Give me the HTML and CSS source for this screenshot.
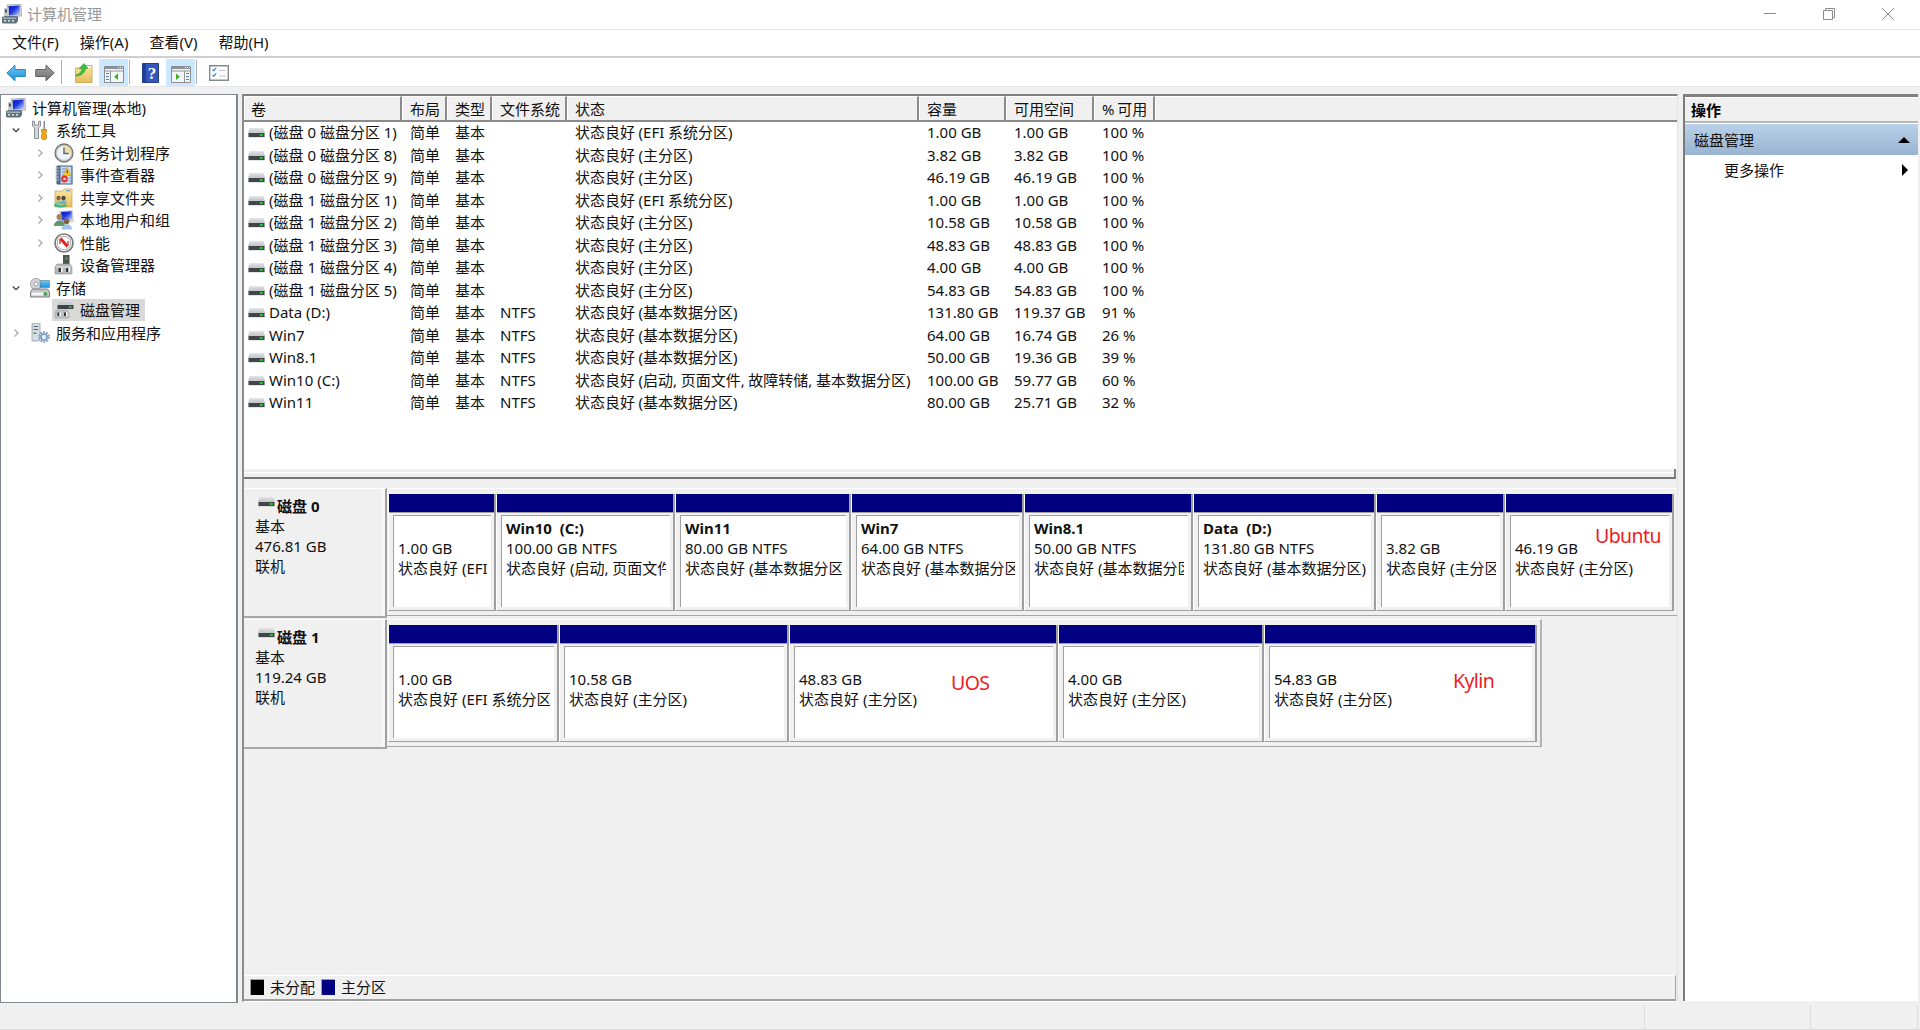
FILE: index.html
```html
<!DOCTYPE html>
<html lang="zh-CN">

<head>
    <meta charset="UTF-8">
    <meta name="viewport" content="width=device-width, initial-scale=1.0">
    <title>计算机管理</title>
    <link rel="stylesheet" href="styles.css">
</head>

<body>
    <!-- 图标 -->
    <svg class="defs" width="0" height="0">
        <defs>
            <linearGradient id="g-screen" x1="0" y1="0" x2="1" y2="1">
                <stop offset="0" stop-color="#0a16b8" />
                <stop offset=".45" stop-color="#1c35e0" />
                <stop offset="1" stop-color="#d5e0fb" />
            </linearGradient>
            <linearGradient id="g-blue" x1="0" y1="0" x2="0" y2="1">
                <stop offset="0" stop-color="#6cc8f5" />
                <stop offset="1" stop-color="#1a8fd8" />
            </linearGradient>
            <linearGradient id="g-gray" x1="0" y1="0" x2="0" y2="1">
                <stop offset="0" stop-color="#a5a5a5" />
                <stop offset="1" stop-color="#6e6e6e" />
            </linearGradient>
            <linearGradient id="g-folder" x1="0" y1="0" x2="0" y2="1">
                <stop offset="0" stop-color="#fbe6a4" />
                <stop offset="1" stop-color="#e6bd5c" />
            </linearGradient>
            <linearGradient id="g-top" x1="0" y1="0" x2="0" y2="1">
                <stop offset="0" stop-color="#e3e5e7" />
                <stop offset="1" stop-color="#bfc2c6" />
            </linearGradient>
            <symbol id="i-computer" viewBox="0 0 20 20">
                <path d="M5 1l14-1 .6 12L6 13z" fill="#d0d2d6" stroke="#9599a3" stroke-width=".6" />
                <path d="M6.500 2.300l11-.9.5 9.300-11 .8z" fill="url(#g-screen)" />
                <path d="M11 12h5v3h-5z" fill="#a0a5ae" />
                <path d="M2 4h4.500v9H2z" fill="#c6cad0" />
                <path d="M3 5.500h2v3H3z" fill="#4b5563" />
                <path d="M0 13l3-1h11l2 1v4l-2 2.500H1l-1-1z" fill="#5f737f" />
                <path d="M1 13.500h13v1.500H1z" fill="#a3b0b7" />
                <path d="M2 16h2v1.500H2zM6 16h2v1.500H6zM10 16h2v1.500h-2z" fill="#dfe6ea" />
            </symbol>
            <symbol id="i-tools" viewBox="0 0 20 20">
                <path d="M2.500 1v5l2 2v10.500h4V8l2-2V1l-2 .5V5h-4V1.500z" fill="#d4d6d8" stroke="#83878b" stroke-width=".9" />
                <path d="M13.500 1h1.600v10h-1.600z" fill="#8b8f94" />
                <path d="M11.500 9.500h5v2.500l-.8 1 .8 2v3.500l-1 1h-3l-1-1V15l.8-2-.8-1z" fill="#f0a818" stroke="#b87809" stroke-width=".7" />
            </symbol>
            <symbol id="i-clock" viewBox="0 0 20 20">
                <circle cx="10" cy="10" r="9" fill="#b5b6b4" stroke="#777876" stroke-width="1.300" />
                <circle cx="10" cy="10" r="7.200" fill="#edf4fa" stroke="#d9d9d5" stroke-width=".8" />
                <path d="M10 10V3a7 7 0 0 1 7 7z" fill="#f4dca2" />
                <path d="M10 4.500V10.500h4.800" fill="none" stroke="#5b6c82" stroke-width="1.500" />
            </symbol>
            <symbol id="i-event" viewBox="0 0 20 20">
                <path d="M3.500 1h14.500v18H3.500z" fill="#c9d8f0" stroke="#43618f" stroke-width="1.200" />
                <path d="M2.500 1h4v18h-4z" fill="#50678d" />
                <path d="M1 3h4M1 6h4M1 9h4M1 12h4M1 15h4" stroke="#b9c6d6" />
                <path d="M8 4h4M8 7h3M8 10h3M15 10h2M15 13h2M15 16h2" stroke="#6f8ec0" />
                <path d="M13 2.500l4 8h-7.500z" fill="#ffd42a" stroke="#c59200" stroke-width=".5" />
                <path d="M13.200 5v3.500" stroke="#222" />
                <circle cx="10.500" cy="14" r="3.400" fill="#db3b38" />
                <path d="M9.400 12.900l2.200 2.200m0-2.200l-2.200 2.200" stroke="#fff" />
            </symbol>
            <symbol id="i-share" viewBox="0 0 20 20">
                <path d="M1 3h8l1-2h8v18H1z" fill="url(#g-folder)" stroke="#cda044" stroke-width=".7" />
                <path d="M12 2.800h4" stroke="#599ad8" stroke-width="1.200" />
                <circle cx="4.500" cy="10" r="2.200" fill="#876247" />
                <circle cx="9.500" cy="10" r="2.200" fill="#574535" />
                <path d="M1.500 17c0-6.500 6-6.500 6 0z" fill="#8cc3a4" />
                <path d="M6.500 16c0-5.500 6-5.500 6 0z" fill="#6aaede" />
                <path d="M.5 16.500c3 2.500 7 2.500 12 .5" stroke="#39b67f" stroke-width="2" fill="none" />
            </symbol>
            <symbol id="i-users" viewBox="0 0 20 20">
                <path d="M5 1l14-1 .6 12L6 13z" fill="#ccd0d6" />
                <path d="M7 2l10.500-.7.5 8.700L8 10.500z" fill="url(#g-screen)" />
                <circle cx="5.500" cy="7" r="3" fill="#a28463" />
                <path d="M0 16c0-7.500 11-7.500 11 0z" fill="#66956b" />
                <circle cx="12.500" cy="11.500" r="2.800" fill="#855f46" />
                <path d="M7.500 19.500c0-7 10.500-7 10.500 0z" fill="#9ec5e8" />
            </symbol>
            <symbol id="i-perf" viewBox="0 0 20 20">
                <circle cx="10" cy="10" r="9" fill="#fff" stroke="#77787a" stroke-width="1.700" />
                <circle cx="10" cy="10" r="6.800" fill="#fff" stroke="#a9a9aa" stroke-width="1" />
                <path d="M6 11V6.500M14 12.500V8" fill="none" stroke="#d92626" stroke-width="1.300" />
                <path d="M6.500 5.500l7 8" stroke="#e02020" stroke-width="2.800" />
            </symbol>
            <symbol id="i-device" viewBox="0 0 20 20">
                <path d="M9 0h6.500v10H9z" fill="#4c5052" />
                <path d="M11.500 2.500h2v2h-2z" fill="#42c957" />
                <path d="M3 9h13l2 3v7H1v-7z" fill="#b6b8ba" stroke="#8d9092" stroke-width=".6" />
                <path d="M2 12h15" stroke="#e8e9ea" />
                <path d="M4.500 13H7v4H4.500zM12 13h2.500v4H12z" fill="#37393b" />
                <path d="M7 13h1.500v4H7zM14.500 13H16v4h-1.500z" fill="#f5f5f5" />
            </symbol>
            <symbol id="i-storage" viewBox="0 0 20 20">
                <circle cx="6" cy="6" r="5.700" fill="#d0d2d5" stroke="#999" stroke-width=".7" />
                <circle cx="6" cy="6" r="1.800" fill="#fff" stroke="#888" stroke-width=".6" />
                <path d="M10 2.500h9.500V9.500H10z" fill="url(#g-blue)" stroke="#6b7b84" stroke-width=".6" />
                <path d="M2.500 11h15l2 3v5H.5v-5z" fill="#c3c5c8" stroke="#74777a" stroke-width=".9" />
                <path d="M1.500 14.500h11.500v3H1.500z" fill="#f4f4f4" />
                <path d="M14 14.500h3v3h-3z" fill="#3f9e4a" />
            </symbol>
            <symbol id="i-diskmgr" viewBox="0 0 20 20">
                <path d="M5 2h13l1.500 3h-16z" fill="#c9ccd0" />
                <path d="M3.500 5H19.500v4H3.500z" fill="#414446" />
                <path d="M15 6.300h2.500v1.500h-2.500z" fill="#3ddc49" />
                <path d="M2 10h11l2 2.500V18H1v-5.500z" fill="#bfc0c2" stroke="#999" stroke-width=".5" />
                <path d="M3.500 12.500h2v3.500h-2zM10 12.500h2v3.500h-2z" fill="#333" />
                <path d="M5.500 12.500H7v3.500H5.500zM12 12.500h1.500v3.500H12z" fill="#fff" />
            </symbol>
            <symbol id="i-service" viewBox="0 0 20 20">
                <path d="M2 1l2-1h6v17l-1.500 1H2z" fill="#d7dde2" stroke="#84929c" stroke-width=".7" />
                <path d="M3.500 3.500h4.500M3.500 6.500h4.500" stroke="#4e6a7e" stroke-width="1.200" />
                <path d="M3.500 9.500h3v1.500h-3z" fill="#3da54c" />
                <circle cx="14" cy="14" r="4.600" fill="none" stroke="#7fa2c4" stroke-width="2.500" stroke-dasharray="1.800 1.090" />
                <circle cx="14" cy="14" r="3" fill="#e4eef6" stroke="#7f9fc0" stroke-width="1.600" />
            </symbol>
            <symbol id="i-drive" viewBox="0 0 17 10">
                <path d="M1.500 0h14L17 5H0z" fill="url(#g-top)" />
                <path d="M0 4.500h17V9.500H0z" fill="#c9cbce" />
                <path d="M.6 5h15.800v4H.6z" fill="#434648" />
                <path d="M11.800 6.200h3v1.600h-3z" fill="#1fe032" />
            </symbol>
            <symbol id="i-open" viewBox="0 0 10 10">
                <path d="M1.800 3.500L5 6.700l3.200-3.200" fill="none" stroke="#404040" stroke-width="1.300" />
            </symbol>
            <symbol id="i-closed" viewBox="0 0 10 10">
                <path d="M3.500 1.500L7 5 3.500 8.500" fill="none" stroke="#a6a6a6" stroke-width="1.200" />
            </symbol>
            <symbol id="i-window" viewBox="0 0 20 17">
                <path d="M.5.500h19v16H.5z" fill="#f4f5f6" stroke="#8a8e93" />
                <path d="M1 1h18v2H1z" fill="#8a9097" />
                <path d="M14 1.500h1M16 1.500h1M18 1.500h.8" stroke="#fff" />
                <path d="M1 5h18" stroke="#8f9499" />
            </symbol>
        </defs>
    </svg>

    <div class="titlebar">
        <svg class="icon"><use href="#i-computer" /></svg>
        <span class="title">计算机管理</span>
        <svg class="win_btn" viewBox="0 0 12 12"><path d="M0 5.500h12" /></svg>
        <svg class="win_btn" viewBox="0 0 12 12"><path d="M.5 2.500h9v9h-9zM2.500 2.500v-2h9v9h-2" /></svg>
        <svg class="win_btn" viewBox="0 0 12 12"><path d="M.2.200l11.600 11.600M11.800.200L.2 11.800" /></svg>
    </div>

    <div class="menubar">
        <span>文件(F)</span>
        <span>操作(A)</span>
        <span>查看(V)</span>
        <span>帮助(H)</span>
    </div>

    <div class="toolbar">
        <svg class="tool back" viewBox="0 0 20 18">
            <path d="M.8 9L9 1.200v4.300h10.300v7H9v4.300z" fill="url(#g-blue)" stroke="#2a86bd" />
        </svg>
        <svg class="tool forward" viewBox="0 0 20 18">
            <path d="M19.200 9L11 1.200v4.300H.7v7H11v4.300z" fill="url(#g-gray)" stroke="#646464" />
        </svg>
        <i class="sep"></i>
        <svg class="tool up" viewBox="0 0 18 20">
            <path d="M.5 5h7l1-2.500h8.500V19.500H.5z" fill="url(#g-folder)" stroke="#c89f48" stroke-width=".8" />
            <path d="M11 4h5" stroke="#fff" stroke-width="1.400" />
            <path d="M1 12c4-1 5.500-3.500 6-6.500H4L9 .5l4 5h-2.500C10 10 6 13 1 13z" fill="#3bbf3f" stroke="#28902b" stroke-width=".5" />
        </svg>
        <span class="tool_on">
            <svg class="win_icon" viewBox="0 0 20 17">
                <use href="#i-window" />
                <path d="M2 7.500h3M2 10.500h3M2 13.500h3" stroke="#4484bd" />
                <path d="M6.500 5v11" stroke="#8f9499" />
                <path d="M14 7.500v6.500L10 10.700z" fill="#3fae2a" />
            </svg>
        </span>
        <i class="sep near"></i>
        <svg class="tool help" viewBox="0 0 17 20">
            <path d="M.5.500h16v19H.5z" fill="#3457bd" stroke="#223c8a" />
            <path d="M1 1h3v18H1z" fill="#233f9a" />
            <text x="10" y="16" text-anchor="middle">?</text>
        </svg>
        <span class="tool_on">
            <svg class="win_icon" viewBox="0 0 20 17">
                <use href="#i-window" />
                <path d="M15 7.500h3M15 10.500h3M15 13.500h3" stroke="#4484bd" />
                <path d="M13.500 5v11" stroke="#8f9499" />
                <path d="M5 7.500v6.500l4-3.300z" fill="#3fae2a" />
            </svg>
        </span>
        <i class="sep near"></i>
        <svg class="tool prop" viewBox="0 0 20 16">
            <path d="M.7.700h18.600v14.600H.7z" fill="#fdfdfd" stroke="#85898c" stroke-width="1.400" />
            <path d="M3.500 4.500l1.200 1.300 2.500-3M3.500 10l1.200 1.300 2.500-3" fill="none" stroke="#3b8ed8" stroke-width="1.300" />
            <path d="M10 5.500h6.500M10 11h6.500" stroke="#c3c6c9" />
        </svg>
    </div>

    <div class="main">
        <ul class="tree">
            <li class="root"><span class="node"><svg class="icon"><use href="#i-computer" /></svg>计算机管理(本地)</span></li>
            <li><svg class="arrow"><use href="#i-open" /></svg><span class="node"><svg class="icon"><use href="#i-tools" /></svg>系统工具</span></li>
            <li class="sub"><svg class="arrow"><use href="#i-closed" /></svg><span class="node"><svg class="icon"><use href="#i-clock" /></svg>任务计划程序</span></li>
            <li class="sub"><svg class="arrow"><use href="#i-closed" /></svg><span class="node"><svg class="icon"><use href="#i-event" /></svg>事件查看器</span></li>
            <li class="sub"><svg class="arrow"><use href="#i-closed" /></svg><span class="node"><svg class="icon"><use href="#i-share" /></svg>共享文件夹</span></li>
            <li class="sub"><svg class="arrow"><use href="#i-closed" /></svg><span class="node"><svg class="icon"><use href="#i-users" /></svg>本地用户和组</span></li>
            <li class="sub"><svg class="arrow"><use href="#i-closed" /></svg><span class="node"><svg class="icon"><use href="#i-perf" /></svg>性能</span></li>
            <li class="sub"><svg class="arrow"></svg><span class="node"><svg class="icon"><use href="#i-device" /></svg>设备管理器</span></li>
            <li><svg class="arrow"><use href="#i-open" /></svg><span class="node"><svg class="icon"><use href="#i-storage" /></svg>存储</span></li>
            <li class="sub"><svg class="arrow"></svg><span class="node active"><svg class="icon"><use href="#i-diskmgr" /></svg>磁盘管理</span></li>
            <li><svg class="arrow"><use href="#i-closed" /></svg><span class="node"><svg class="icon"><use href="#i-service" /></svg>服务和应用程序</span></li>
        </ul>

        <div class="center">
            <div class="volumes">
                <div class="row head">
                    <span>卷</span><span>布局</span><span>类型</span><span>文件系统</span><span>状态</span><span>容量</span><span>可用空间</span><span>% 可用</span><span></span>
                </div>
                <div class="row"><span><svg class="drive"><use href="#i-drive" /></svg>(磁盘 0 磁盘分区 1)</span><span>简单</span><span>基本</span><span></span><span>状态良好 (EFI 系统分区)</span><span>1.00 GB</span><span>1.00 GB</span><span>100 %</span></div>
                <div class="row"><span><svg class="drive"><use href="#i-drive" /></svg>(磁盘 0 磁盘分区 8)</span><span>简单</span><span>基本</span><span></span><span>状态良好 (主分区)</span><span>3.82 GB</span><span>3.82 GB</span><span>100 %</span></div>
                <div class="row"><span><svg class="drive"><use href="#i-drive" /></svg>(磁盘 0 磁盘分区 9)</span><span>简单</span><span>基本</span><span></span><span>状态良好 (主分区)</span><span>46.19 GB</span><span>46.19 GB</span><span>100 %</span></div>
                <div class="row"><span><svg class="drive"><use href="#i-drive" /></svg>(磁盘 1 磁盘分区 1)</span><span>简单</span><span>基本</span><span></span><span>状态良好 (EFI 系统分区)</span><span>1.00 GB</span><span>1.00 GB</span><span>100 %</span></div>
                <div class="row"><span><svg class="drive"><use href="#i-drive" /></svg>(磁盘 1 磁盘分区 2)</span><span>简单</span><span>基本</span><span></span><span>状态良好 (主分区)</span><span>10.58 GB</span><span>10.58 GB</span><span>100 %</span></div>
                <div class="row"><span><svg class="drive"><use href="#i-drive" /></svg>(磁盘 1 磁盘分区 3)</span><span>简单</span><span>基本</span><span></span><span>状态良好 (主分区)</span><span>48.83 GB</span><span>48.83 GB</span><span>100 %</span></div>
                <div class="row"><span><svg class="drive"><use href="#i-drive" /></svg>(磁盘 1 磁盘分区 4)</span><span>简单</span><span>基本</span><span></span><span>状态良好 (主分区)</span><span>4.00 GB</span><span>4.00 GB</span><span>100 %</span></div>
                <div class="row"><span><svg class="drive"><use href="#i-drive" /></svg>(磁盘 1 磁盘分区 5)</span><span>简单</span><span>基本</span><span></span><span>状态良好 (主分区)</span><span>54.83 GB</span><span>54.83 GB</span><span>100 %</span></div>
                <div class="row"><span><svg class="drive"><use href="#i-drive" /></svg>Data (D:)</span><span>简单</span><span>基本</span><span>NTFS</span><span>状态良好 (基本数据分区)</span><span>131.80 GB</span><span>119.37 GB</span><span>91 %</span></div>
                <div class="row"><span><svg class="drive"><use href="#i-drive" /></svg>Win7</span><span>简单</span><span>基本</span><span>NTFS</span><span>状态良好 (基本数据分区)</span><span>64.00 GB</span><span>16.74 GB</span><span>26 %</span></div>
                <div class="row"><span><svg class="drive"><use href="#i-drive" /></svg>Win8.1</span><span>简单</span><span>基本</span><span>NTFS</span><span>状态良好 (基本数据分区)</span><span>50.00 GB</span><span>19.36 GB</span><span>39 %</span></div>
                <div class="row"><span><svg class="drive"><use href="#i-drive" /></svg>Win10 (C:)</span><span>简单</span><span>基本</span><span>NTFS</span><span>状态良好 (启动, 页面文件, 故障转储, 基本数据分区)</span><span>100.00 GB</span><span>59.77 GB</span><span>60 %</span></div>
                <div class="row"><span><svg class="drive"><use href="#i-drive" /></svg>Win11</span><span>简单</span><span>基本</span><span>NTFS</span><span>状态良好 (基本数据分区)</span><span>80.00 GB</span><span>25.71 GB</span><span>32 %</span></div>
            </div>
            <div class="splitter"></div>

            <div class="disks">
                <div class="disk">
                    <div class="disk_info">
                        <b><svg class="drive"><use href="#i-drive" /></svg>磁盘 0</b>
                        <p>基本</p>
                        <p>476.81 GB</p>
                        <p>联机</p>
                    </div>
                    <div class="parts disk0">
                        <div class="part"><div class="info"><b></b><p>1.00 GB</p><p>状态良好 (EFI</p></div></div>
                        <div class="part"><div class="info"><b>Win10&nbsp; (C:)</b><p>100.00 GB NTFS</p><p>状态良好 (启动, 页面文件</p></div></div>
                        <div class="part"><div class="info"><b>Win11</b><p>80.00 GB NTFS</p><p>状态良好 (基本数据分区</p></div></div>
                        <div class="part"><div class="info"><b>Win7</b><p>64.00 GB NTFS</p><p>状态良好 (基本数据分区</p></div></div>
                        <div class="part"><div class="info"><b>Win8.1</b><p>50.00 GB NTFS</p><p>状态良好 (基本数据分区</p></div></div>
                        <div class="part"><div class="info"><b>Data&nbsp; (D:)</b><p>131.80 GB NTFS</p><p>状态良好 (基本数据分区)</p></div></div>
                        <div class="part"><div class="info"><b></b><p>3.82 GB</p><p>状态良好 (主分区</p></div></div>
                        <div class="part"><div class="info"><b></b><p>46.19 GB</p><p>状态良好 (主分区)</p></div><em class="mark ubuntu">Ubuntu</em></div>
                    </div>
                </div>
                <div class="disk">
                    <div class="disk_info">
                        <b><svg class="drive"><use href="#i-drive" /></svg>磁盘 1</b>
                        <p>基本</p>
                        <p>119.24 GB</p>
                        <p>联机</p>
                    </div>
                    <div class="parts disk1">
                        <div class="part"><div class="info"><b></b><p>1.00 GB</p><p>状态良好 (EFI 系统分区</p></div></div>
                        <div class="part"><div class="info"><b></b><p>10.58 GB</p><p>状态良好 (主分区)</p></div></div>
                        <div class="part"><div class="info"><b></b><p>48.83 GB</p><p>状态良好 (主分区)</p></div><em class="mark uos">UOS</em></div>
                        <div class="part"><div class="info"><b></b><p>4.00 GB</p><p>状态良好 (主分区)</p></div></div>
                        <div class="part"><div class="info"><b></b><p>54.83 GB</p><p>状态良好 (主分区)</p></div><em class="mark kylin">Kylin</em></div>
                    </div>
                </div>
            </div>

            <div class="legend">
                <i class="black"></i><span>未分配</span>
                <i class="navy"></i><span>主分区</span>
            </div>
        </div>

        <div class="actions">
            <div class="actions_head">操作</div>
            <div class="actions_group"><span>磁盘管理</span><svg width="12" height="6" viewBox="0 0 12 6"><path d="M6 0l6 6H0z" /></svg></div>
            <div class="actions_item"><span>更多操作</span><svg width="6" height="12" viewBox="0 0 6 12"><path d="M0 0l6 6-6 6z" /></svg></div>
        </div>
    </div>

    <div class="statusbar"><span></span><span></span><span></span></div>
</body>

</html>
```
FILE: styles.css
```css
* {
    box-sizing: border-box;
    margin: 0;
    padding: 0;
}

body {
    display: flex;
    flex-direction: column;
    width: 1920px;
    height: 1030px;
    overflow: hidden;
    background: #f0f0f0;
    color: #111;
    font: 15px/20px "Noto Sans", "Noto Sans CJK SC", sans-serif;
    white-space: nowrap;
}

svg {
    display: block;
    flex: none;
}

.defs {
    position: absolute;
}

.icon {
    width: 20px;
    height: 20px;
}

.drive {
    width: 17px;
    height: 10px;
}

/* 标题栏 */
.titlebar {
    display: flex;
    align-items: center;
    height: 30px;
    padding: 0 26px 1px 2px;
    border-bottom: 1px solid #e4e6e9;
    background: #fff;
    color: #999;
}

.title {
    flex: 1;
    margin-left: 5px;
}

.win_btn {
    width: 12px;
    height: 12px;
    margin-left: 47px;
    fill: none;
    stroke: #8c8c8c;
}

/* 菜单 */
.menubar {
    display: flex;
    gap: 21px;
    height: 28px;
    padding: 2px 12px 0;
    border-bottom: 2px solid #cfcfd2;
    background: #fff;
}

/* 工具栏 */
.toolbar {
    display: flex;
    align-items: center;
    height: 29px;
    padding: 1px 0 1px 6px;
    border-bottom: 1px solid #e6e6e6;
    background: #fff;
}

.back,
.forward {
    width: 20px;
    height: 18px;
    margin-top: 2px;
}

.forward {
    margin-left: 9px;
}

.sep {
    width: 1px;
    height: 24px;
    margin-left: 6px;
    background: #b0b0b0;
}

.sep.near {
    margin-left: 1px;
}

.up {
    width: 18px;
    height: 20px;
    margin: 2px 6px 0 13px;
}

.tool_on {
    display: flex;
    align-items: center;
    justify-content: center;
    width: 29px;
    height: 27px;
    background: #cce8ff;
}

.win_icon {
    width: 20px;
    height: 17px;
    margin-top: 4px;
}

.help {
    width: 17px;
    height: 20px;
    margin: 1px 7px 0 12px;
}

.help text {
    fill: #fff;
    font: bold 17px "Liberation Serif", serif;
}

.prop {
    width: 20px;
    height: 16px;
    margin: 1px 0 0 12px;
}

.main {
    display: flex;
    height: 915px;
    padding-top: 7px;
}

/* 左侧树 */
.tree {
    width: 238px;
    height: 909px;
    margin-right: 4px;
    padding-top: 1.500px;
    border: 1px solid #828790;
    border-right-width: 2px;
    background: #fff;
    list-style: none;
}

.tree li {
    display: flex;
    align-items: center;
    height: 22.5px;
    padding-left: 10px;
}

.tree .sub {
    padding-left: 34px;
}

.tree .root {
    padding-left: 3px;
}

.arrow {
    width: 10px;
    height: 10px;
    margin-right: 7px;
}

.node {
    display: flex;
    align-items: center;
    gap: 6px;
    height: 22px;
    padding: 0 5px 0 2px;
}

.node.active {
    background: #d9d9d9;
}

/* 中间 */
.center {
    display: flex;
    flex-direction: column;
    width: 1436px;
    height: 908px;
    margin-right: 5px;
    border: 2px solid #808080;
    border-left-color: #8c8c8c;
    border-right: 1px solid #e3e3e3;
    border-bottom: 1px solid #fff;
}

.volumes {
    height: 373px;
    background: #fff;
}

.row {
    display: grid;
    grid-template-columns: 158px 45px 45px 75px 352px 87px 88px 61px 1fr;
    align-items: center;
    height: 22.5px;
    padding-bottom: 2px;
}

.row span {
    display: flex;
    align-items: center;
    padding-left: 8px;
}

.row span:nth-child(5) {
    word-spacing: -.3px;
}

.row .drive {
    margin: 2px 4px 0 -5px;
}

.row span:first-child {
    padding-left: 9px;
}

.head.row {
    height: 26px;
    padding-bottom: 0;
    border-bottom: 2px solid #8a8a8a;
    background: #f0f0f0;
}

.head.row span {
    height: 24px;
    padding: 1px 0 0 7px;
    border-top: 1px solid #fff;
    border-left: 1px solid #fff;
    border-right: 2px solid #8a8a8a;
    word-spacing: -1px;
}

.head.row span:first-child {
    padding-left: 6px;
}

.head.row span:last-child {
    border-right: 0;
}

.splitter {
    height: 10px;
    margin-right: 1px;
    border-right: 2px solid #808080;
    border-bottom: 2px solid #777;
    background: linear-gradient(#f0f0f0 3px, #fff 3px, #fff 4px, #f0f0f0 4px);
}

/* 磁盘 */
.disks {
    flex: 1;
    padding-top: 9px;
}

.disk {
    display: flex;
    height: 131px;
}

.disk_info {
    width: 143px;
    height: 130px;
    padding: 7px 0 0 11px;
    border-top: 1px solid #fff;
    border-right: 2px solid #a0a0a0;
    border-bottom: 2px solid #a8a8a8;
    box-shadow: inset -3px 0 #f8f8f8;
}

.disk_info b {
    display: flex;
    margin-left: 3px;
}

.disk_info .drive {
    margin: 1px 2px 0 0;
}

.parts {
    display: grid;
    height: 128px;
    padding: 5px 3px 4px 1px;
    border-top: 1px solid #fff;
    border-bottom: 1px solid #a8a8a8;
}

.disk0 {
    grid-template-columns: 108px 179px 176px 173px 169px 183px 129px 169px;
}

.disk1 {
    grid-template-columns: 171px 230px 269px 206px 273px;
    border-right: 2px solid #b4b4b4;
}

.part {
    position: relative;
    display: flex;
    flex-direction: column;
    min-width: 0;
    padding: 0 3px 3px 4px;
    border-right: 2px solid #a0a0a0;
    border-bottom: 1px solid #a0a0a0;
    border-left: 1px solid #fff;
}

/* 分区上方的色条 */
.part::before {
    content: "";
    height: 18px;
    margin: 0 -3px 3px -4px;
    background: #000080;
    box-shadow: 0 1px #a0a0a0;
}

.info {
    flex: 1;
    padding: 2px 4px 0;
    border-top: 1px solid #a0a0a0;
    border-left: 1px solid #a0a0a0;
    background: #fff;
}

.info b,
.info p {
    display: block;
    height: 20px;
    overflow: hidden;
}

.mark {
    position: absolute;
    color: #ed1c24;
    font-size: 19.500px;
    font-style: normal;
    letter-spacing: -.6px;
}

.ubuntu {
    left: 89px;
    top: 32px;
}

.uos {
    left: 161px;
    top: 48px;
}

.kylin {
    left: 188px;
    top: 46px;
}

/* 图例 */
.legend {
    display: flex;
    align-items: center;
    height: 26px;
    margin-right: 1px;
    padding: 0 0 1px 6px;
    border-top: 1px solid #fff;
    border-right: 1px solid #a0a0a0;
    border-bottom: 2px solid #a0a0a0;
}

.legend i {
    width: 14px;
    height: 16px;
    margin-right: 6px;
    border: 1px solid #a0a0a0;
    border-width: 1px 0 0 1px;
}

.legend span {
    margin-right: 6px;
}

.black {
    background: #000;
}

.navy {
    background: #000080;
}

/* 右侧操作 */
.actions {
    width: 235px;
    height: 907px;
    border-top: 3px solid #808080;
    border-left: 2px solid #7a7a7a;
    background: #fff;
}

.actions_head {
    height: 26px;
    margin-bottom: 1px;
    padding: 2px 6px 0;
    border-top: 1px solid #fff;
    border-bottom: 2px solid #b8b8b8;
    background: #f0f0f0;
    color: #000;
    font-weight: bold;
}

.actions_group,
.actions_item {
    display: flex;
    align-items: center;
    justify-content: space-between;
    height: 31px;
    padding: 0 8px 0 9px;
}

.actions_group {
    background: linear-gradient(#b9d1ea, #99b4d1);
}

.actions_item {
    height: 29px;
    padding: 0 10px 0 39px;
}

/* 状态栏 */
.statusbar {
    display: flex;
    flex: 1;
    padding: 3px 2px 0 0;
    border-bottom: 1px solid #d9d9d9;
}

.statusbar span {
    width: 107px;
    border-right: 1px solid #dedede;
}

.statusbar span:first-child {
    width: 1645px;
}

.statusbar span:nth-child(2) {
    width: 166px;
}
```
